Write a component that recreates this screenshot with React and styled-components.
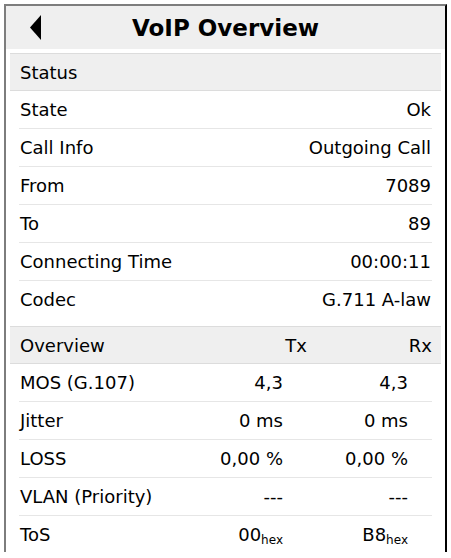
import React from "react";
import styled, { createGlobalStyle } from "styled-components";

const GlobalStyle = createGlobalStyle`
  body {
    margin: 0;
    background: #fff;
    font-family: "DejaVu Sans", "Liberation Sans", sans-serif;
    color: #000;
  }
`;

const Frame = styled.div`
  margin: 4px 0 0 4px;
  width: 439px;
  height: 546px;
  border-left: 2px solid #7d7d7d;
  border-top: 2px solid #7d7d7d;
  border-right: 2px solid #000;
  display: flex;
  flex-direction: column;
`;

const Header = styled.header`
  height: 43px;
  flex: none;
  background: #efefef;
  display: flex;
  align-items: center;
  justify-content: center;
  position: relative;
`;

const Back = styled.svg`
  position: absolute;
  left: 24px;
  top: 9px;
`;

const Title = styled.h1`
  margin: 0;
  font-size: 23px;
  font-weight: bold;
`;

const Body = styled.div`
  padding: 4px 4px 0;
  display: flex;
  flex-direction: column;
`;

const Section = styled.section`
  display: flex;
  flex-direction: column;
  margin-bottom: ${(p) => (p.$gap ? "7px" : "0")};
`;

const Grid = styled.div`
  display: grid;
  grid-template-columns: ${(p) => (p.$cols ? "1fr 125px 125px" : "1fr auto")};
  align-items: center;
  padding: 0 1px;
`;

const SectionHead = styled(Grid)`
  height: 36px;
  padding: 0 9px 0 10px;
  background: #efefef;
  border-top: 1px solid #dcdcdc;
  border-bottom: 1px solid #dcdcdc;
  font-size: 18px;
`;

const Row = styled(Grid)`
  height: 37px;
  margin: 0 9px;
  font-size: 18px;
  border-bottom: 1px solid ${(p) => (p.$last ? "transparent" : "#e6e6e6")};
  &:last-child {
    border-bottom-color: transparent;
  }
`;

const Label = styled.span`
  white-space: nowrap;
`;

const Value = styled.span`
  text-align: right;
  white-space: nowrap;
  padding-right: ${(p) => (p.$inset ? "23px" : "0")};
`;

const Sub = styled.sub`
  font-size: 12px;
  vertical-align: -3px;
  line-height: 0;
`;

const status = [
  ["State", "Ok"],
  ["Call Info", "Outgoing Call"],
  ["From", "7089"],
  ["To", "89"],
  ["Connecting Time", "00:00:11"],
  ["Codec", "G.711 A-law"],
];

const overview = [
  ["MOS (G.107)", "4,3", "4,3"],
  ["Jitter", "0 ms", "0 ms"],
  ["LOSS", "0,00 %", "0,00 %"],
  ["VLAN (Priority)", "---", "---"],
  ["ToS", <>00<Sub>hex</Sub></>, <>B8<Sub>hex</Sub></>],
];

export default function App() {
  return (
    <>
      <GlobalStyle />
      <Frame>
        <Header>
          <Back width="12" height="25" viewBox="0 0 12 25">
            <path d="M11 0 L0 12.5 L11 25 Z" fill="#000" />
          </Back>
          <Title>VoIP Overview</Title>
        </Header>
        <Body>
          <Section $gap>
            <SectionHead>
              <Label>Status</Label>
            </SectionHead>
            {status.map(([k, v]) => (
              <Row key={k}>
                <Label>{k}</Label>
                <Value>{v}</Value>
              </Row>
            ))}
          </Section>
          <Section>
            <SectionHead $cols>
              <Label>Overview</Label>
              <Value>Tx</Value>
              <Value>Rx</Value>
            </SectionHead>
            {overview.map(([k, tx, rx]) => (
              <Row key={k} $cols>
                <Label>{k}</Label>
                <Value $inset>{tx}</Value>
                <Value $inset>{rx}</Value>
              </Row>
            ))}
          </Section>
        </Body>
      </Frame>
    </>
  );
}
